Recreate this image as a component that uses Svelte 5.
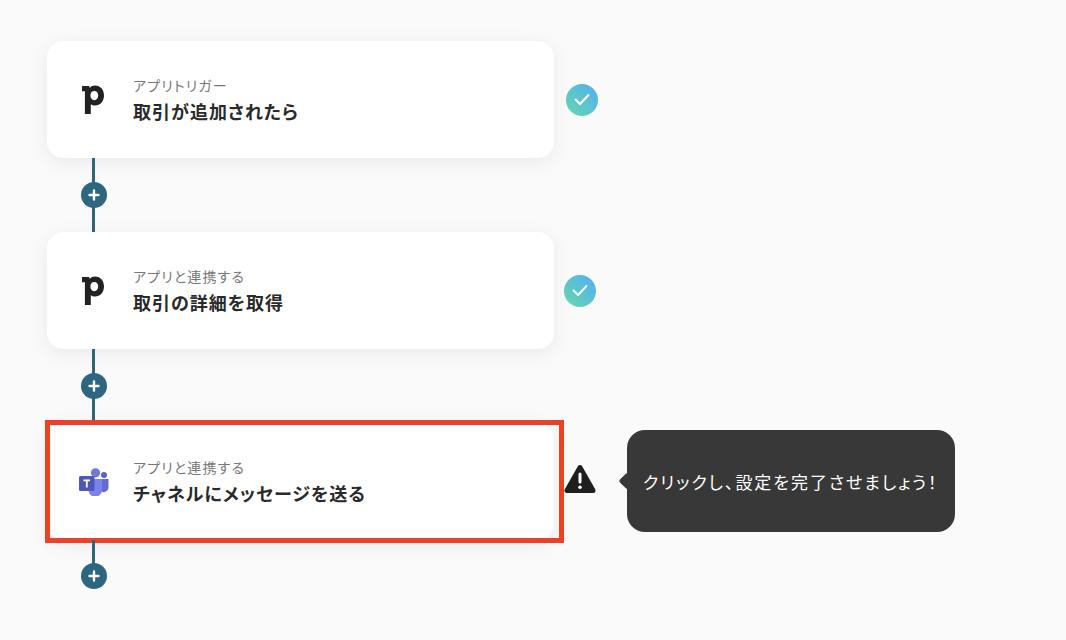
<script lang="ts">
  const steps = [
    { app: 'pipedrive', label: 'アプリトリガー', title: '取引が追加されたら', status: 'done', shift: false },
    { app: 'pipedrive', label: 'アプリと連携する', title: '取引の詳細を取得', status: 'done', shift: true },
    { app: 'teams', label: 'アプリと連携する', title: 'チャネルにメッセージを送る', status: 'warn', shift: true },
  ];
</script>

<main class="flow">
  {#each steps as step}
    <div class="step">
      <div class="card" class:selected={step.status === 'warn'}>
        <div class="logo">
          {#if step.app === 'pipedrive'}
            <svg width="24" height="30" viewBox="0 0 24 30" aria-hidden="true">
              <path fill="#222" fill-rule="evenodd" d="M0 1h7.200l.5 1.900C9 1.400 10.900.6 13.100.6c5.300 0 8.900 4.200 8.900 10 0 5.900-3.800 10-9 10-1.700 0-3.100-.5-4.200-1.400V29H2.900V6.200H0zM12.300 6c-2.500 0-3.900 1.900-3.900 4.600s1.400 4.700 3.900 4.700 3.900-2 3.900-4.700S14.800 6 12.300 6z" />
            </svg>
          {:else}
            <svg width="30" height="28" viewBox="0 0 30 28" aria-hidden="true">
              <circle cx="25" cy="7" r="3" fill="#5a62c8" />
              <path fill="#646cd4" d="M20 11h9.500v8.500a4.700 4.700 0 0 1-9.400 0z" />
              <circle cx="16.500" cy="4.800" r="4.600" fill="#7078dc" />
              <path fill="#7b83eb" d="M9.500 11h13.500v11a6.700 6.700 0 0 1-13.500 0z" />
              <rect x="0" y="8" width="15.500" height="15" rx="1.500" fill="#4f57bd" />
              <path fill="#fff" d="M4.500 11.500h6.500v1.700H8.700v6.400H6.900v-6.400H4.500z" />
            </svg>
          {/if}
        </div>
        <div class="text">
          <span class="label">{step.label}</span>
          <strong class="title">{step.title}</strong>
        </div>
      </div>

      {#if step.status === 'done'}
        <span class="check" class:shift={step.shift}>
          <svg width="16" height="13" viewBox="0 0 16 13" aria-hidden="true">
            <path d="M1.500 6.500l4.500 4.500 8.500-9" fill="none" stroke="#fff" stroke-width="2" stroke-linecap="round" stroke-linejoin="round" />
          </svg>
        </span>
      {:else}
        <span class="warn">
          <svg width="32" height="30" viewBox="0 0 32 30" aria-hidden="true">
            <path fill="#1f1f1f" stroke="#1f1f1f" stroke-width="5" stroke-linejoin="round" d="M16 3.500L3 26.500h26z" />
            <rect x="14.500" y="8.500" width="3" height="11" rx="1.500" fill="#fff" />
            <circle cx="16" cy="23.300" r="1.800" fill="#fff" />
          </svg>
        </span>
        <div class="tip">クリックし、設定を完了させましょう！</div>
      {/if}
    </div>

    <div class="connector">
      <span class="plus">
        <svg width="12" height="12" viewBox="0 0 12 12" aria-hidden="true">
          <path d="M6 1.500v9M1.500 6h9" stroke="#fff" stroke-width="2.400" stroke-linecap="round" />
        </svg>
      </span>
    </div>
  {/each}
</main>

<style>
  :global(body) {
    margin: 0;
    background: #fafafa;
  }

  .flow {
    display: flex;
    flex-direction: column;
    height: 640px;
    box-sizing: border-box;
    padding: 41px 0 0 47px;
    overflow: hidden;
    font-family: "Noto Sans CJK JP", "Noto Sans", sans-serif;
    font-feature-settings: "palt";
  }

  .step {
    display: flex;
    align-items: center;
    height: 117px;
  }

  .card {
    position: relative;
    display: flex;
    align-items: center;
    flex: none;
    box-sizing: border-box;
    width: 507px;
    height: 117px;
    padding-left: 32px;
    background: #fff;
    border-radius: 16px;
    box-shadow: 0 4px 20px rgba(0, 0, 0, 0.07);
  }

  .card.selected::after {
    content: '';
    position: absolute;
    inset: -3px -10px -3px -2px;
    border: 5px solid #ee4023;
  }

  .logo {
    display: flex;
    align-items: center;
    justify-content: center;
    width: 30px;
    height: 30px;
    margin-right: 24px;
  }

  .text {
    display: flex;
    flex-direction: column;
    gap: 3px;
  }

  .label {
    font-size: 14px;
    line-height: 20px;
    letter-spacing: 1.15px;
    color: #777;
  }

  .title {
    font-size: 18px;
    line-height: 26px;
    font-weight: 700;
    letter-spacing: 1px;
    color: #2a2a2a;
  }

  .check {
    display: flex;
    align-items: center;
    justify-content: center;
    width: 32px;
    height: 32px;
    margin-left: 12px;
    border-radius: 50%;
    background: linear-gradient(45deg, #6ad8ae, #4eaef4);
  }

  .check.shift {
    margin-left: 10px;
  }

  .warn {
    display: flex;
    width: 32px;
    margin-left: 10px;
    margin-bottom: 6px;
  }

  .tip {
    position: relative;
    display: flex;
    align-items: center;
    box-sizing: border-box;
    width: 328px;
    height: 102px;
    margin-left: 31px;
    margin-bottom: 1px;
    padding-left: 16px;
    background: #383838;
    border-radius: 18px;
    font-size: 17px;
    letter-spacing: 1.95px;
    color: #fff;
  }

  .tip::before {
    content: '';
    position: absolute;
    left: -6px;
    top: 45px;
    width: 12px;
    height: 12px;
    background: #383838;
    transform: rotate(45deg);
    border-radius: 2px;
  }

  .connector {
    position: relative;
    flex: none;
    width: 3px;
    height: 74px;
    margin-left: 45px;
    background: #2d6680;
  }

  .connector:last-child {
    height: 36px;
  }

  .plus {
    position: absolute;
    left: -11px;
    top: 24px;
    display: flex;
    align-items: center;
    justify-content: center;
    width: 26px;
    height: 26px;
    border-radius: 50%;
    background: #2d6680;
  }

  .connector:last-child .plus {
    top: 23px;
  }
</style>
